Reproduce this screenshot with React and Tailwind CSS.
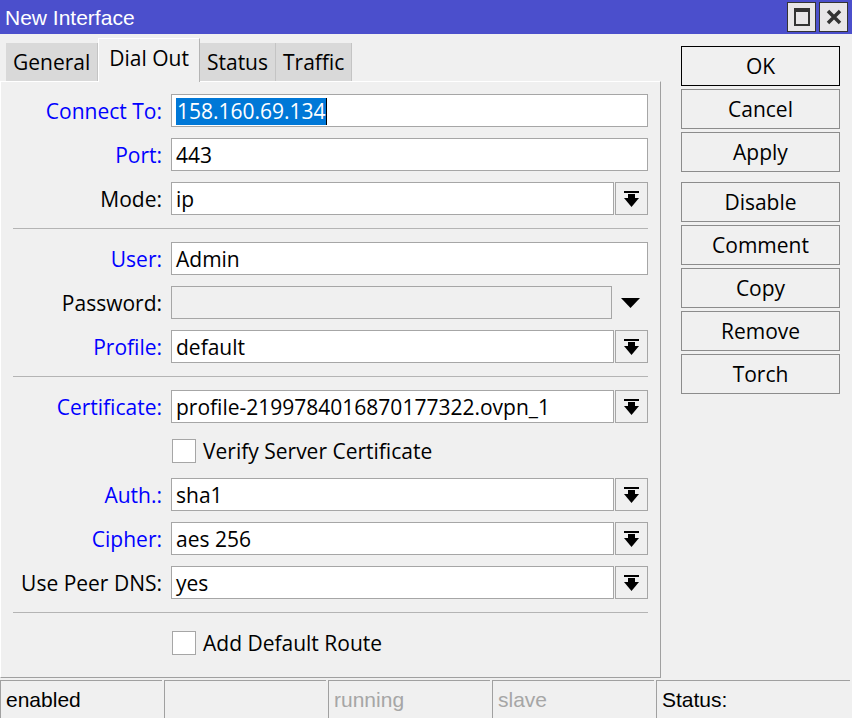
import React from 'react';

const ui = "font-['Open_Sans',sans-serif]";
const arial = "font-['Liberation_Sans',Arial,sans-serif]";

const DropIcon = () => (
  <svg width="15" height="16" viewBox="0 0 15 16">
    <rect x="0" y="0" width="15" height="2" fill="#000" />
    <rect x="4" y="3" width="7" height="5" fill="#000" />
    <polygon points="0,7 15,7 7.5,16" fill="#000" />
  </svg>
);

const Label = ({ text, blue }) => (
  <div className={`w-[161px] shrink-0 pt-[2px] text-right whitespace-nowrap ${blue ? 'text-[#0000ff]' : 'text-black'}`}>{text}</div>
);

const Field = ({ label, blue, value, drop, children }) => (
  <div className="flex items-center h-[33px]">
    <Label text={label} blue={blue} />
    <div className="ml-[9px] flex flex-1 h-full">
      <div className="flex-1 h-full bg-white border border-[#a6a6a6] flex items-center pl-[4px] pt-[2px] whitespace-nowrap overflow-hidden">
        {children || value}
      </div>
      {drop && (
        <div className="ml-px w-[33px] h-full border border-[#a6a6a6] bg-[#f0f0f0] flex items-center justify-center">
          <DropIcon />
        </div>
      )}
    </div>
  </div>
);

const Check = ({ text }) => (
  <div className="flex items-center h-[33px] pl-[171px]">
    <div className="w-[24px] h-[24px] bg-white border border-[#a6a6a6]" />
    <span className="ml-[7px] pt-[2px]">{text}</span>
  </div>
);

const Sep = () => <div className="h-px bg-[#b4b4b4] ml-[12px] my-[13px]" />;

const Btn = ({ text, primary }) => (
  <div className={`h-[40px] pt-[2px] flex items-center justify-center border ${primary ? 'border-black' : 'border-[#8c8c8c]'} bg-[#f0f0f0]`}>
    {text}
  </div>
);

const Tab = ({ text, active }) =>
  active ? (
    <div className="h-[44px] px-[10px] bg-[#f0f0f0] border-l border-t border-white border-r border-r-[#b4b4b4] flex items-center -mb-px relative z-10 pb-[3px]">
      {text}
    </div>
  ) : (
    <div className="h-[38px] px-[7px] pt-[2px] bg-[#d9d9d9] border-r border-[#c4c4c4] flex items-center">
      {text}
    </div>
  );

const Cell = ({ text, grey, w }) => (
  <div className={`${w} h-full border-l border-t border-[#a0a0a0] flex items-center pl-[5px] ${grey ? 'text-[#a6a6a6]' : 'text-black'}`}>
    {text}
  </div>
);

export default function App() {
  return (
    <div className={`w-[852px] h-[718px] bg-[#f0f0f0] flex flex-col overflow-hidden ${ui} text-[21px] text-black`}>
      {/* title bar */}
      <div className="h-[34px] bg-[#4b4fcc] flex items-center justify-between pl-[5px] pr-[4px]">
        <span className={`${arial} text-white text-[21px] pt-[2px]`}>New Interface</span>
        <div className="flex gap-[3px] items-center">
          <div className="w-[29px] h-[30px] bg-[#e8e6e8] border border-[#333] flex items-center justify-center">
            <div className="w-[16px] h-[18px] border-2 border-[#333] border-t-[4px]" />
          </div>
          <div className="w-[29px] h-[30px] bg-[#e8e6e8] border border-[#333] flex items-center justify-center">
            <svg width="16" height="16" viewBox="0 0 16 16">
              <path d="M2 2 L14 14 M14 2 L2 14" stroke="#333" strokeWidth="3.5" />
            </svg>
          </div>
        </div>
      </div>

      <div className="flex flex-1 min-h-0">
        {/* left side */}
        <div className="w-[661px] flex flex-col pt-[3px]">
          <div className="flex items-end h-[44px] pl-[6px]">
            <div className="flex items-end">
              <Tab text="General" />
              <Tab text="Dial Out" active />
              <Tab text="Status" />
              <Tab text="Traffic" />
            </div>
          </div>
          <div className="h-[597px] border-t border-l border-white border-r border-b border-r-[#a0a0a0] border-b-[#a0a0a0] pt-[12px] pr-[12px]">
            <div className="flex flex-col gap-[11px]">
              <Field label="Connect To:" blue>
                <span className="bg-[#0078d7] text-white leading-[27px] pl-px">158.160.69.134</span>
                <span className="w-px h-[27px] bg-black" />
              </Field>
              <Field label="Port:" blue value="443" />
              <Field label="Mode:" value="ip" drop />
            </div>
            <Sep />
            <div className="flex flex-col gap-[11px]">
              <Field label="User:" blue value="Admin" />
              <div className="flex items-center h-[33px]">
                <Label text="Password:" />
                <div className="ml-[9px] w-[441px] h-full bg-[#f0f0f0] border border-[#a6a6a6]" />
                <div className="flex-1 flex items-center justify-center">
                  <svg width="19" height="10" viewBox="0 0 19 10">
                    <polygon points="0,0 19,0 9.5,10" fill="#000" />
                  </svg>
                </div>
              </div>
              <Field label="Profile:" blue value="default" drop />
            </div>
            <Sep />
            <div className="flex flex-col gap-[11px]">
              <Field label="Certificate:" blue value="profile-2199784016870177322.ovpn_1" drop />
              <Check text="Verify Server Certificate" />
              <Field label="Auth.:" blue value="sha1" drop />
              <Field label="Cipher:" blue value="aes 256" drop />
              <Field label="Use Peer DNS:" value="yes" drop />
            </div>
            <Sep />
            <Check text="Add Default Route" />
          </div>
        </div>

        {/* right buttons */}
        <div className="w-[159px] ml-[20px] pt-[12px] flex flex-col">
          <div className="flex flex-col gap-[3px]">
            <Btn text="OK" primary />
            <Btn text="Cancel" />
            <Btn text="Apply" />
          </div>
          <div className="flex flex-col gap-[3px] mt-[10px]">
            <Btn text="Disable" />
            <Btn text="Comment" />
            <Btn text="Copy" />
            <Btn text="Remove" />
            <Btn text="Torch" />
          </div>
        </div>
      </div>

      {/* status bar */}
      <div className={`h-[38px] mt-[2px] flex gap-[2px] pr-[2px] ${arial} text-[21px]`}>
        <Cell text="enabled" w="w-[162px]" />
        <Cell text="" w="w-[162px]" />
        <Cell text="running" grey w="w-[162px]" />
        <Cell text="slave" grey w="w-[162px]" />
        <Cell text="Status:" w="flex-1" />
      </div>
    </div>
  );
}
